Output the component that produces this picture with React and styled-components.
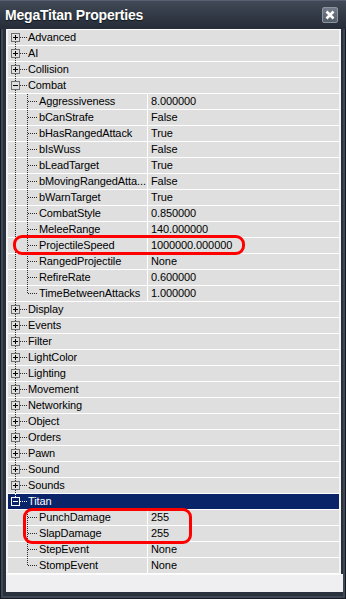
import styled, { createGlobalStyle } from "styled-components";

const categories = [
	{ name: "Advanced" },
	{ name: "AI" },
	{ name: "Collision" },
	{
		name: "Combat",
		open: true,
		props: [
			["Aggressiveness", "8.000000"],
			["bCanStrafe", "False"],
			["bHasRangedAttack", "True"],
			["bIsWuss", "False"],
			["bLeadTarget", "True"],
			["bMovingRangedAtta...", "False"],
			["bWarnTarget", "True"],
			["CombatStyle", "0.850000"],
			["MeleeRange", "140.000000"],
			["ProjectileSpeed", "1000000.000000"],
			["RangedProjectile", "None"],
			["RefireRate", "0.600000"],
			["TimeBetweenAttacks", "1.000000"],
		],
	},
	{ name: "Display" },
	{ name: "Events" },
	{ name: "Filter" },
	{ name: "LightColor" },
	{ name: "Lighting" },
	{ name: "Movement" },
	{ name: "Networking" },
	{ name: "Object" },
	{ name: "Orders" },
	{ name: "Pawn" },
	{ name: "Sound" },
	{ name: "Sounds" },
	{
		name: "Titan",
		open: true,
		selected: true,
		props: [
			["PunchDamage", "255"],
			["SlapDamage", "255"],
			["StepEvent", "None"],
			["StompEvent", "None"],
		],
	},
];

const GlobalStyle = createGlobalStyle`
	html, body {
		margin: 0;
		padding: 0;
		background: #29313c;
	}
	body {
		font-family: "Liberation Sans", Arial, sans-serif;
	}
`;

// 트리 점선 + 확장 박스
const CategoryGlyph = ({ first, last, open, selected }) => {
	const line = selected ? "#ffffff" : "#2a2a2a";
	const box = selected ? "#ffffff" : "#6f6f6f";
	const sign = selected ? "#ffffff" : "#000000";
	return (
		<Glyph width="20" height="15" shapeRendering="crispEdges">
			{!first && <line x1="7.5" y1="0" x2="7.5" y2="3" stroke={line} strokeDasharray="1 1" />}
			{!last && <line x1="7.5" y1="12" x2="7.5" y2="15" stroke={line} strokeDasharray="1 1" />}
			<line x1="12" y1="7.5" x2="20" y2="7.5" stroke={line} strokeDasharray="1 1" />
			<rect x="3.5" y="3.5" width="8" height="8" fill="none" stroke={box} />
			<line x1="5" y1="7.5" x2="10" y2="7.5" stroke={sign} />
			{!open && <line x1="7.5" y1="5" x2="7.5" y2="10" stroke={sign} />}
		</Glyph>
	);
};

const ChildGlyph = ({ parentLast, last }) => (
	<Glyph width="31" height="15" shapeRendering="crispEdges">
		{!parentLast && <line x1="7.5" y1="0" x2="7.5" y2="15" stroke="#2a2a2a" strokeDasharray="1 1" />}
		<line x1="19.5" y1="0" x2="19.5" y2={last ? 8 : 15} stroke="#2a2a2a" strokeDasharray="1 1" />
		<line x1="20" y1="7.5" x2="30" y2="7.5" stroke="#2a2a2a" strokeDasharray="1 1" />
	</Glyph>
);

const App = () => {
	return (
		<Window>
			<GlobalStyle />
			<TitleBar>
				<Title>MegaTitan Properties</Title>
				<CloseButton>
					<svg width="10" height="10">
						<path d="M1.5 1.5 L8.5 8.5 M8.5 1.5 L1.5 8.5" stroke="#ffffff" strokeWidth="2.6" />
					</svg>
				</CloseButton>
			</TitleBar>
			<Panel>
				{categories.map((cat, ci) => {
					const lastCat = ci === categories.length - 1;
					return (
						<Group key={cat.name}>
							<Row $selected={cat.selected}>
								<CategoryCell>
									<CategoryGlyph
										first={ci === 0}
										last={lastCat}
										open={cat.open}
										selected={cat.selected}
									/>
									<Label>{cat.name}</Label>
								</CategoryCell>
							</Row>
							{cat.open &&
								cat.props.map(([name, value], pi) => (
									<Row key={name}>
										<NameCell>
											<ChildGlyph parentLast={lastCat} last={pi === cat.props.length - 1} />
											<Label>{name}</Label>
										</NameCell>
										<ValueCell>{value}</ValueCell>
									</Row>
								))}
						</Group>
					);
				})}
			</Panel>
			<Description />
			<Highlight $left={13} $top={235} $width={232} $height={20} />
			<Highlight $left={23} $top={508} $width={169} $height={36} />
		</Window>
	);
};
export default App;

const Window = styled.div`
	position: relative;
	width: 346px;
	height: 599px;
	box-sizing: border-box;
	background: #29313c;
	box-shadow: inset 0 0 0 1px #161a20, inset 0 0 0 3px #3d4756;
	display: flex;
	flex-direction: column;
	overflow: hidden;
`;

const TitleBar = styled.div`
	height: 29px;
	flex-shrink: 0;
	display: flex;
	align-items: center;
	justify-content: space-between;
	padding: 0 8px 0 5px;
	background: linear-gradient(#434b59 0%, #343c48 45%, #262d38 100%);
	box-shadow: inset 0 1px 0 #566070;
`;

const Title = styled.div`
	font-family: "Liberation Sans", Arial, sans-serif;
	font-weight: bold;
	font-size: 14px;
	letter-spacing: -0.2px;
	color: #ffffff;
	text-shadow: 0 1px 1px #10141a;
	padding-top: 1px;
`;

const CloseButton = styled.div`
	width: 14px;
	height: 14px;
	display: flex;
	align-items: center;
	justify-content: center;
	background: linear-gradient(#747c89, #555d6a);
	border: 1px solid #8d95a1;
	border-radius: 2px;
`;

const Panel = styled.div`
	margin: 0 5px 0 6px;
	border-top: 1px solid #ffffff;
	border-left: 2px solid #f3f3f3;
	border-right: 2px solid #f3f3f3;
	background: #dfdfdf;
	flex-shrink: 0;
`;

const Group = styled.div`
	display: flex;
	flex-direction: column;
`;

const Row = styled.div`
	height: 15px;
	display: flex;
	border-bottom: 1px solid #ffffff;
	background: ${p => (p.$selected ? "#0a246a" : "#dfdfdf")};
	color: ${p => (p.$selected ? "#ffffff" : "#000000")};
	font-size: 11px;
	letter-spacing: -0.1px;
	line-height: 15px;
`;

const Glyph = styled.svg`
	flex-shrink: 0;
	display: block;
`;

const CategoryCell = styled.div`
	flex: 1;
	display: flex;
	align-items: center;
`;

const NameCell = styled.div`
	flex: 0 0 139px;
	display: flex;
	align-items: center;
	overflow: hidden;
`;

const Label = styled.span`
	white-space: nowrap;
`;

const ValueCell = styled.div`
	flex: 1;
	border-left: 1px solid #ffffff;
	padding-left: 3px;
	white-space: nowrap;
`;

const Description = styled.div`
	margin: 0 3px 0 6px;
	height: 17px;
	background: #efeff2;
	border-top: 1px solid #fbfbfb;
	flex-shrink: 0;
`;

const Highlight = styled.div`
	position: absolute;
	left: ${p => p.$left}px;
	top: ${p => p.$top}px;
	width: ${p => p.$width}px;
	height: ${p => p.$height}px;
	box-sizing: border-box;
	border: 3px solid #ff0000;
	border-radius: 9px;
	pointer-events: none;
`;
